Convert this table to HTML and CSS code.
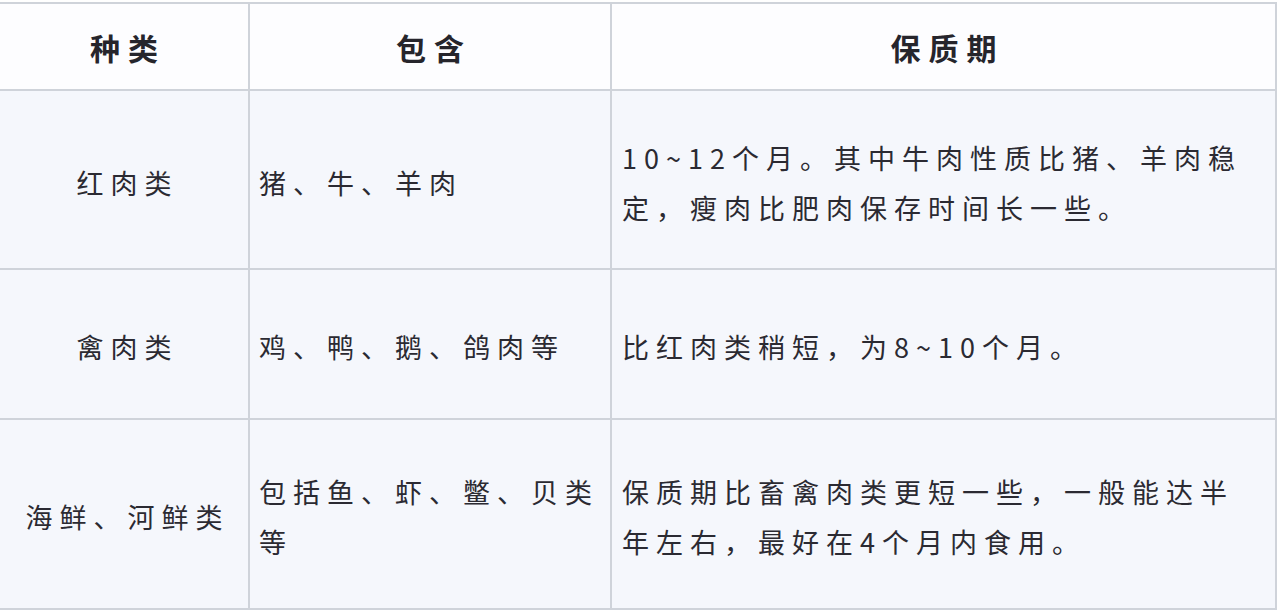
FILE: index.html
```html
<!DOCTYPE html>
<html lang="zh-CN">
<head>
<meta charset="utf-8">
<title>肉类保质期</title>
<link rel="stylesheet" href="styles.css">
</head>
<body>
<div class="table">
  <div class="cell head c1"><div class="txt">种类</div></div>
  <div class="cell head c2"><div class="txt">包含</div></div>
  <div class="cell head c3"><div class="txt">保质期</div></div>

  <div class="cell body c1"><div class="txt">红肉类</div></div>
  <div class="cell body c2"><div class="txt">猪、牛、羊肉</div></div>
  <div class="cell body c3"><div class="txt">10~12个月。其中牛肉性质比猪、羊肉稳定，瘦肉比肥肉保存时间长一些。</div></div>

  <div class="cell body c1"><div class="txt">禽肉类</div></div>
  <div class="cell body c2"><div class="txt">鸡、鸭、鹅、鸽肉等</div></div>
  <div class="cell body c3"><div class="txt">比红肉类稍短，为8~10个月。</div></div>

  <div class="cell body c1"><div class="txt">海鲜、河鲜类</div></div>
  <div class="cell body c2"><div class="txt">包括鱼、虾、鳖、贝类等</div></div>
  <div class="cell body c3"><div class="txt">保质期比畜禽肉类更短一些，一般能达半年左右，最好在4个月内食用。</div></div>
</div>
</body>
</html>
```

FILE: styles.css
```css
html, body {
  margin: 0;
  padding: 0;
  background: #ffffff;
}

body {
  font-family: "Noto Sans CJK SC", "Noto Sans", sans-serif;
  color: #2b2a32;
}

.table {
  display: grid;
  grid-template-columns: 248px 360px 663px;
  grid-template-rows: 85px 177px 148px 188px;
  gap: 2px;
  padding: 2px 2px 2px 0;
  margin-top: 2px;
  width: 1275px;
  background: #cfd3da;
}

.cell {
  display: flex;
  align-items: center;
  font-size: 27px;
  letter-spacing: 7px;
  line-height: 50px;
  background: #f5f7fc;
}

.txt {
  flex: 1;
  min-width: 0;
}

.head {
  background: #fdfdff;
  font-size: 30px;
  font-weight: 700;
  letter-spacing: 8px;
  text-align: center;
  padding-left: 8px;
  color: #26252c;
}

.body.c1 {
  text-align: center;
  padding-left: 7px;
  padding-top: 6px;
}

.body.c2 {
  padding-left: 9px;
  padding-right: 4px;
  padding-top: 6px;
}

.body.c3 {
  padding-left: 10px;
  padding-right: 22px;
  padding-top: 6px;
}
```
